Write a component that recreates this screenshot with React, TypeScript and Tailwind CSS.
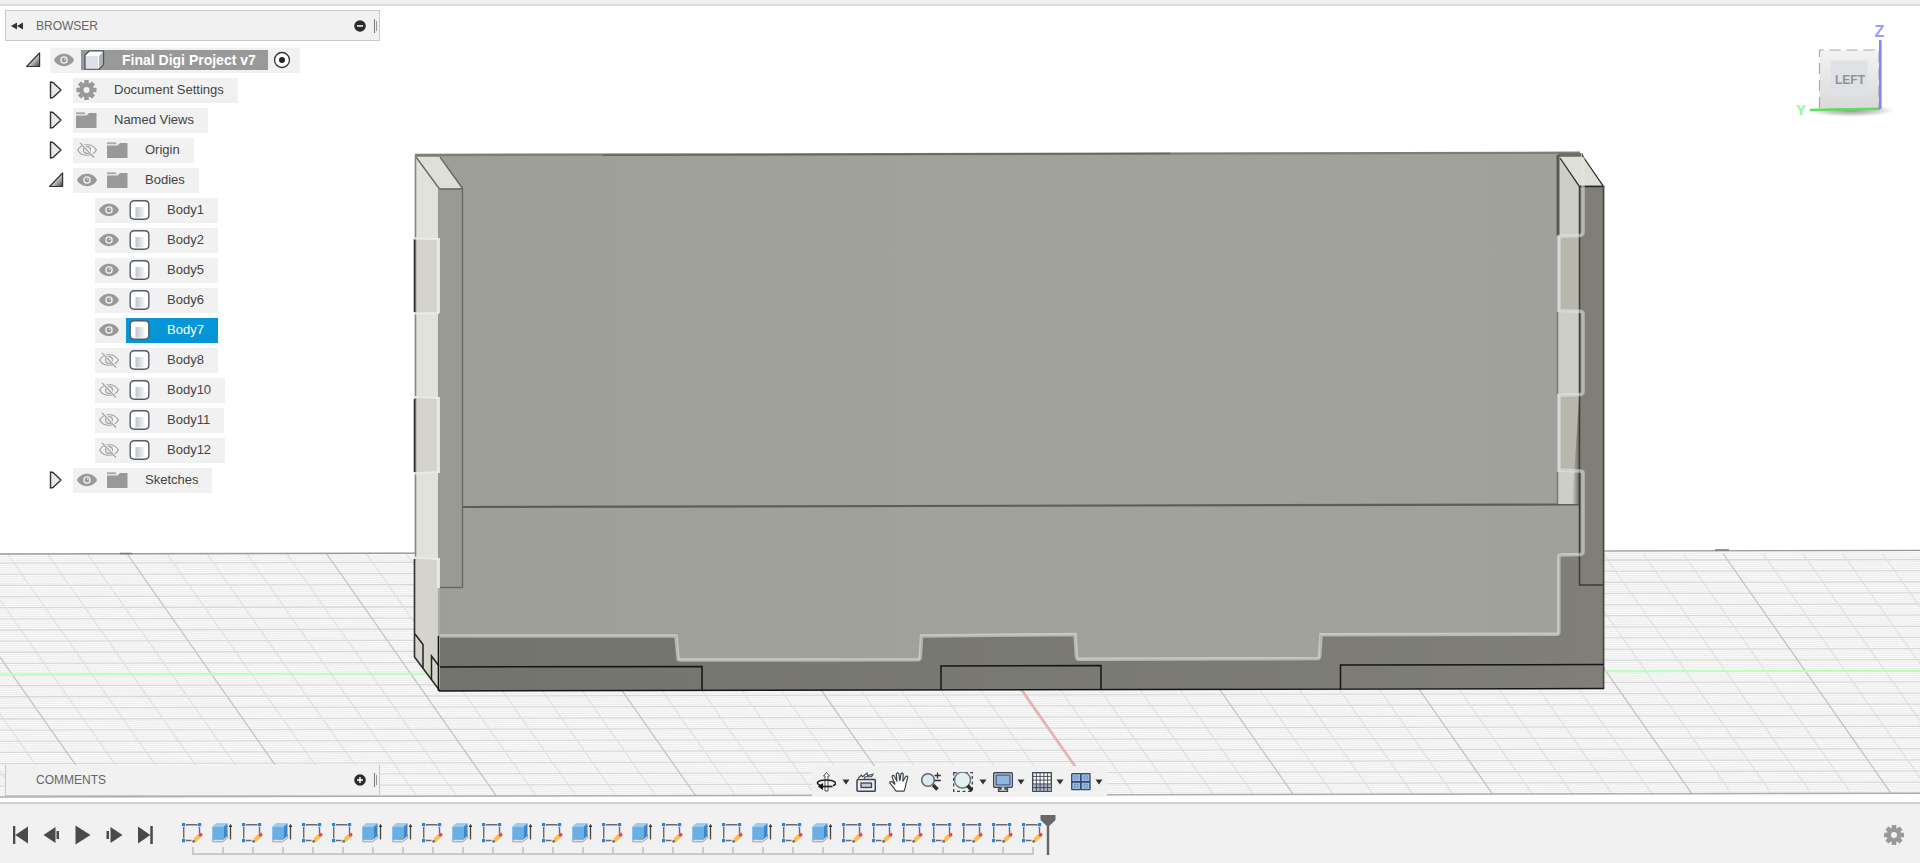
import React, { useState } from "react";

/* ---------- small icons ---------- */

function Gear({ className = "" }: { className?: string }) {
  return (
    <svg viewBox="0 0 20 20" className={`h-5 w-5 ${className}`} aria-hidden="true">
      <g fill="#999">
        {[0, 45, 90, 135].map((a) => (
          <rect key={a} x="7.700" y="0" width="4.600" height="20" rx="0.6" transform={`rotate(${a} 10 10)`} />
        ))}
        <circle cx="10" cy="10" r="7.300" />
      </g>
      <circle cx="10" cy="10" r="3" fill="#f1f1f1" />
    </svg>
  );
}

function Eye({ off = false }: { off?: boolean }) {
  return (
    <svg viewBox="0 0 20 20" className="h-5 w-5" aria-hidden="true">
      {off ? (
        <g fill="none" stroke="#a0a0a0" strokeWidth="1.200">
          <path d="M.6 10C4.500 3 15.500 3 19.400 10C15.500 17 4.500 17 .6 10Z" />
          <circle cx="10" cy="10" r="3.400" />
          <path d="M3.500 2.500L17.500 17.500" stroke="#f1f1f1" strokeWidth="2.600" />
          <path d="M3 2.800L17 17.500" />
        </g>
      ) : (
        <g>
          <path d="M0 10C4 1.800 16 1.800 20 10C16 18.200 4 18.200 0 10Z" fill="#999" />
          <circle cx="10" cy="10" r="3.100" fill="none" stroke="#f1f1f1" strokeWidth="1.300" />
          <circle cx="10.800" cy="9.200" r="0.800" fill="#f1f1f1" />
        </g>
      )}
    </svg>
  );
}

function Folder() {
  return (
    <svg viewBox="0 0 21 20" className="h-5 w-[21px]" aria-hidden="true">
      <path d="M0 2.300H8.500L10 4.300H0Z" fill="#aaa" />
      <path d="M0 5.500H10.500L13 3H20.500V18H0Z" fill="#999" />
    </svg>
  );
}

function Cylinder() {
  return (
    <svg viewBox="0 0 21 20" className="h-5 w-[21px]" aria-hidden="true">
      <defs>
        <linearGradient id="cyl">
          <stop offset="0" stopColor="#bfc4cc" />
          <stop offset="1" stopColor="#f4f5f8" />
        </linearGradient>
      </defs>
      <path d="M5.500 .8H15.500Q19.800 .8 19.800 4.500V15.500Q19.800 19.200 15.500 19.200H5.500Q1.200 19.200 1.200 15.500V4.500Q1.200 .8 5.500 .8Z" fill="#fff" stroke="#555b67" strokeWidth="1.400" />
      <rect x="6.500" y="7" width="9" height="10.500" fill="url(#cyl)" />
    </svg>
  );
}

function Component() {
  return (
    <svg viewBox="0 0 21 20" className="h-5 w-[21px]" aria-hidden="true">
      <path d="M1 5L5.500 .800H19.500V14.500L15 19.200H1Z" fill="#fff" stroke="#4a4f5a" strokeWidth="1.300" strokeLinejoin="round" />
      <rect x="2" y="6" width="12" height="12.500" fill="#dde0e6" />
      <path d="M15 6L19 2V14L15 18.500Z" fill="#aeb3bc" />
    </svg>
  );
}

function Twisty({ open }: { open: boolean }) {
  return (
    <svg viewBox="0 0 16 20" className="h-5 w-4" aria-hidden="true">
      <defs>
        <linearGradient id="tw" x1="0" y1="0" x2="1" y2="1">
          <stop offset="0.400" stopColor="#eee" />
          <stop offset="1" stopColor="#444" />
        </linearGradient>
      </defs>
      {open ? (
        <path d="M.6 16.500L13.600 3V16.500Z" fill="url(#tw)" stroke="#333" strokeWidth="1.200" strokeLinejoin="round" />
      ) : (
        <path d="M1.500 2V18L4 17.500L12 10L4 2.500Z" fill="#e8e8ea" stroke="#333" strokeWidth="1.400" strokeLinejoin="round" />
      )}
    </svg>
  );
}

function Caret() {
  return (
    <svg viewBox="0 0 8 6" className="h-1.5 w-2" aria-hidden="true">
      <path d="M.5 .5H7.500L4 5.500Z" fill="#333" />
    </svg>
  );
}

/* ---------- browser tree ---------- */

type Node = {
  label: string;
  level: 0 | 1 | 2;
  icon: "component" | "gear" | "folder" | "body";
  eye?: "on" | "off";
  open?: boolean;
};

const nodes: Node[] = [
  { label: "Final Digi Project v7", level: 0, icon: "component", eye: "on", open: true },
  { label: "Document Settings", level: 1, icon: "gear", open: false },
  { label: "Named Views", level: 1, icon: "folder", open: false },
  { label: "Origin", level: 1, icon: "folder", eye: "off", open: false },
  { label: "Bodies", level: 1, icon: "folder", eye: "on", open: true },
  { label: "Body1", level: 2, icon: "body", eye: "on" },
  { label: "Body2", level: 2, icon: "body", eye: "on" },
  { label: "Body5", level: 2, icon: "body", eye: "on" },
  { label: "Body6", level: 2, icon: "body", eye: "on" },
  { label: "Body7", level: 2, icon: "body", eye: "on" },
  { label: "Body8", level: 2, icon: "body", eye: "off" },
  { label: "Body10", level: 2, icon: "body", eye: "off" },
  { label: "Body11", level: 2, icon: "body", eye: "off" },
  { label: "Body12", level: 2, icon: "body", eye: "off" },
  { label: "Sketches", level: 1, icon: "folder", eye: "on", open: false },
];

const indent = ["pl-[21px]", "pl-[44px]", "pl-[66px]"];

function TreeRow({ node, selected, onSelect }: { node: Node; selected: boolean; onSelect: () => void }) {
  const root = node.level === 0;
  const tone = root
    ? "h-5 bg-[#999] text-white font-bold text-[14px] pr-3"
    : selected
      ? "h-[25px] bg-[#0696d7] text-white text-[13px] pr-[14px]"
      : "h-[25px] text-[#444] text-[13px] pr-[14px]";
  return (
    <li className={`flex h-[30px] items-center ${indent[node.level]}`}>
      <span className="flex w-6 shrink-0">
        {node.open !== undefined && (
          <button aria-label={`Toggle ${node.label}`}>
            <Twisty open={node.open} />
          </button>
        )}
      </span>
      <div className="flex h-[25px] items-center bg-[#f1f1f1]">
        {node.eye && (
          <button className="flex w-[31px] pl-1" aria-label={`Visibility of ${node.label}`}>
            <Eye off={node.eye === "off"} />
          </button>
        )}
        <button onClick={onSelect} className={`flex items-center gap-[17px] whitespace-nowrap pl-[3px] ${tone}`}>
          {node.icon === "gear" && <Gear className="w-[21px]" />}
          {node.icon === "folder" && <Folder />}
          {node.icon === "body" && <Cylinder />}
          {node.icon === "component" && <Component />}
          {node.label}
        </button>
        {root && (
          <button className="pl-1 pr-2" aria-label="Activate component">
            <svg viewBox="0 0 20 20" className="h-5 w-5" aria-hidden="true">
              <circle cx="10" cy="10" r="7.500" fill="#fff" stroke="#333" strokeWidth="1.300" />
              <circle cx="10" cy="10" r="3" fill="#222" />
            </svg>
          </button>
        )}
      </div>
    </li>
  );
}

function RoundSign({ plus }: { plus: boolean }) {
  return (
    <svg viewBox="0 0 12 12" className="h-3 w-3" aria-hidden="true">
      <circle cx="6" cy="6" r="5.800" fill="#2b2b2b" />
      <path d={plus ? "M3 6H9M6 3V9" : "M3 6H9"} stroke="#fff" strokeWidth="1.500" />
    </svg>
  );
}

function PanelBar({ title, collapse, plus }: { title: string; collapse: boolean; plus: boolean }) {
  return (
    <div
      className={`flex h-[31px] w-[375px] items-center border-[#c8c8c8] bg-[#f1f1f1] pl-[5px] text-[12px] text-[#666] ${
        collapse ? "border" : "border-x border-b"
      }`}
    >
      <span className="flex w-[25px]">
        {collapse && (
          <button aria-label="Collapse browser">
            <svg viewBox="0 0 12 8" className="h-2 w-3" aria-hidden="true">
              <path d="M6 .5V7.500L0 4ZM12 .5V7.500L6 4Z" fill="#333" />
            </svg>
          </button>
        )}
      </span>
      <h2 className="flex-1">{title}</h2>
      <button aria-label={`${plus ? "Expand" : "Minimise"} ${title}`}>
        <RoundSign plus={plus} />
      </button>
      <span className="ml-2 mr-0.5 flex items-center gap-px">
        <span className="h-[14px] w-px bg-[#777]" />
        <span className="h-[10px] w-px bg-[#999]" />
      </span>
    </div>
  );
}

/* ---------- 3D canvas ---------- */

const HORIZON = 554;
const FLOOR_END = 797;
const rows = Array.from({ length: 23 }, (_, i) => 563.2 + (i - 1) * 11.13);
const diagonals = Array.from({ length: 56 }, (_, i) => ({ x: 127.3 + (i - 8) * 39.9, major: (i - 8) % 5 === 0 }));

function Scene() {
  const drift = -3.7;
  return (
    <svg
      viewBox="0 6 1920 796"
      preserveAspectRatio="xMidYMid slice"
      className="absolute inset-0 h-full w-full"
      role="img"
      aria-label="Box model on the ground grid"
    >
      <defs>
        <clipPath id="floor">
          <path d={`M0 ${HORIZON}L1920 ${HORIZON + drift}V${FLOOR_END + drift}L0 ${FLOOR_END}Z`} />
        </clipPath>
        <linearGradient id="face">
          <stop offset="0" stopColor="#9d9e97" />
          <stop offset="0.300" stopColor="#a0a19a" />
          <stop offset="0.700" stopColor="#a2a29c" />
          <stop offset="1" stopColor="#a0a19a" />
        </linearGradient>
        <linearGradient id="base">
          <stop offset="0" stopColor="#72736c" />
          <stop offset="1" stopColor="#7f7f77" />
        </linearGradient>
        <linearGradient id="inner" x1="0" x2="1">
          <stop offset="0" stopColor="#7c7c76" stopOpacity="0" />
          <stop offset="1" stopColor="#6f6f69" />
        </linearGradient>
      </defs>
      <rect y="-300" width="1920" height="1500" fill="#fff" />

      {/* ground grid */}
      <g clipPath="url(#floor)">
        <rect y="540" width="1920" height="260" fill="#f9f9f9" />
        {rows.map((y) => (
          <g key={y}>
            {[2.2, 4.5, 6.7, 8.9].map((d) => (
              <path key={d} d={`M0 ${y + d}L1920 ${y + d + drift}`} stroke="#ececec" strokeWidth="1" />
            ))}
            <path d={`M0 ${y}L1920 ${y + drift}`} stroke="#d8d8d8" strokeWidth="1.300" />
          </g>
        ))}
        {diagonals.map(({ x, major }) => (
          <path
            key={x}
            d={`M${x} 554L${x + 171} 798`}
            stroke={major ? "#c3c3c3" : "#dfdfdf"}
            strokeWidth={major ? 1.3 : 1.1}
          />
        ))}
        <path d={`M0 674.500L1920 ${674.5 + drift}`} stroke="#b8ffb8" strokeWidth="2" />
        <path d="M927 554L1098 798" stroke="#ff9c9c" strokeWidth="1.400" />
      </g>
      <path d={`M0 ${HORIZON}L1920 ${HORIZON + drift}`} stroke="#9a9a9a" strokeWidth="1.300" />
      <path d={`M0 ${FLOOR_END}L1920 ${FLOOR_END + drift}`} stroke="#adadad" strokeWidth="1.600" />
      <path d="M120 553.500H132M1715 550H1729" stroke="#777" strokeWidth="1.500" />

      {/* box body */}
      <path d="M415 155L1580 153L1604 186V688L440 691L415 657Z" fill="url(#base)" />
      <path
        d="M415 155L1583 153V236H1559V311H1583V395H1559V471H1583V555H1559V634.500L1320 635V658.500L1077 659.500L1075 635L921 636L920 660H678L676.500 636H440Z"
        fill="url(#face)"
      />
      <path d="M440 189H462V587H440Z" fill="#999a94" />
      <path d="M415 155L1580 152.800" stroke="#7d7e7a" strokeWidth="2.400" fill="none" />
      <path d="M603 155.200L1170 153.500" stroke="#666762" strokeWidth="1.600" />
      <path d="M462 507L1580 504.500" stroke="#5d5e5a" strokeWidth="2.200" />

      {/* left wall */}
      <path d="M415 155L440 189V691L415 657Z" fill="#e1e2dc" />
      <path d="M415 238H439V313H415ZM415 397H439V473H415ZM415 558H439V690L415 657Z" fill="#d4d4cc" />
      <path d="M416 157H441L462 188.500H439.500Z" fill="#dfdfda" />
      <path d="M440 157L462.500 188.500M416 157L439.500 189H462.500V587.500H440" fill="none" stroke="#666762" strokeWidth="1.300" />
      <path d="M415.500 155V558" stroke="#858682" strokeWidth="1.600" />
      <path d="M439 189V238M439 313V397M439 473V558" stroke="#868781" strokeWidth="1.600" />
      <path d="M414.500 239V312M414.500 399V472M414.500 559V657L440 691" fill="none" stroke="#2f302c" strokeWidth="1.600" />
      <g stroke="#e9eae6" strokeWidth="2.200" fill="none">
        <path d="M414 238.500L438 239V313L414 313.500M414 397L438 398V472L414 473.500M414 557.500L438 559V588" />
      </g>
      <path d="M439 588V636" stroke="#aaaba6" strokeWidth="2" />
      <path d="M415 634L423 644.500V668M431.500 680V656L439 666" fill="none" stroke="#22231f" strokeWidth="1.500" />
      <path d="M438.500 636V691" stroke="#111" strokeWidth="1.600" />

      {/* right wall */}
      <path d="M1558 157H1579V504H1558Z" fill="#cdcec8" />
      <path d="M1560 236H1579V311H1560ZM1560 395H1579V471H1560Z" fill="#b7b7ad" />
      <path d="M1579 400V504H1572Z" fill="url(#inner)" />
      <path d="M1579.500 186H1603.500V585H1579.500Z" fill="#7f7e77" />
      <path d="M1559 157L1581 154L1603 185.500H1579.500Z" fill="#e0ded8" />
      <path d="M1558 155H1581" stroke="#6b6c69" strokeWidth="3.500" />
      <path d="M1558 155V236" stroke="#595a57" strokeWidth="3" />
      <path d="M1557.500 312V394M1557.500 472V504" stroke="#777872" strokeWidth="1.500" />
      <path d="M1560 158L1579.500 186.500H1603.500L1582 155" fill="none" stroke="#2c2c2a" strokeWidth="1.300" />
      <path d="M1579.500 187V585H1603.500" fill="none" stroke="#3c3d39" strokeWidth="1.500" />
      <path d="M1603.600 186V689" stroke="#444541" strokeWidth="1.600" />

      {/* base joints */}
      <g fill="none" stroke="#151613" strokeWidth="1.500">
        <path d="M440 667L702 666.500V690.500M941 690V666L1101 665.500V690M1340.500 689.500V665L1603.500 664.500" />
        <path d="M439 691L1604 688.500" />
      </g>

      {/* selected body outline */}
      <path
        d="M440 636L676 636L678 658Q678 660 680 660L918 659.800Q920 659.500 920.300 657L921.500 636L1075 634.500L1076.500 657Q1077 659.500 1079 659.200L1317 658.500Q1319.500 658.200 1319.700 656L1321 634.800L1557 634.300Q1558.800 634 1558.800 632V557Q1558.800 555 1561 555L1580 554.500Q1583 554 1583 552V473Q1583 471 1580 471L1559 470V395.500L1580 394.500Q1583 394 1583 392V314Q1583 311.500 1580 311.300L1559 310.500V236.500L1580 235.500Q1583 235 1583 232V157"
        fill="none"
        stroke="#e4e6e2"
        strokeOpacity="0.560"
        strokeWidth="3.500"
      />
    </svg>
  );
}

function ViewCube() {
  return (
    <svg viewBox="1790 16 120 110" className="h-[110px] w-[120px]" role="img" aria-label="View cube">
      <defs>
        <linearGradient id="cube" x1="0" y1="0" x2="0" y2="1">
          <stop offset="0" stopColor="#f3f3f3" />
          <stop offset="1" stopColor="#dadada" />
        </linearGradient>
        <radialGradient id="shade">
          <stop offset="0" stopColor="#777" stopOpacity="0.800" />
          <stop offset="0.600" stopColor="#999" stopOpacity="0.450" />
          <stop offset="1" stopColor="#aaa" stopOpacity="0" />
        </radialGradient>
      </defs>
      <ellipse cx="1851" cy="110.500" rx="44" ry="6.500" fill="url(#shade)" />
      <rect x="1819.500" y="50" width="60" height="58" fill="url(#cube)" />
      <path d="M1819.500 108V50H1879V108" fill="none" stroke="#aaa" strokeWidth="1.200" strokeDasharray="11 6" />
      <rect x="1830.500" y="60.500" width="37" height="36" fill="#dfe1e4" />
      <path d="M1810 110L1880 108.800" stroke="#5be05b" strokeWidth="2.400" />
      <path d="M1880.300 40V109" stroke="#8484ff" strokeWidth="2.600" />
      <text x="1850" y="83.500" textAnchor="middle" fontSize="12" fontWeight="700" fill="#8d9299">LEFT</text>
      <text x="1879.500" y="36.500" textAnchor="middle" fontSize="16" fontWeight="700" fill="#9a9aff">Z</text>
      <text x="1801" y="115" textAnchor="middle" fontSize="15" fontWeight="700" fill="#8cff8c">Y</text>
    </svg>
  );
}

/* ---------- navigation bar ---------- */

function NavIcon({ label, menu = false, gap = "gap-1", children }: { label: string; menu?: boolean; gap?: string; children: React.ReactNode }) {
  return (
    <button aria-label={label} className={`flex items-center ${gap}`}>
      <svg viewBox="0 0 20 20" className="h-5 w-5" fill="none" stroke="#3c424e" strokeWidth="1.300" aria-hidden="true">
        {children}
      </svg>
      {menu && <Caret />}
    </button>
  );
}

function NavBar() {
  return (
    <div role="toolbar" aria-label="Navigation" className="flex h-[31px] items-center bg-[#f1f1f1] px-1">
      <div className="flex items-center gap-[6px]">
        <NavIcon label="Orbit" menu gap="gap-[6px]">
          <path d="M9 19V4H7.500L10.500 .5L13.500 4H12V19Z" fill="#fff" strokeWidth="0.900" />
          <path d="M4.500 13.500C-1.500 11 2 8 10 8C19 8 22.500 11.500 17 13.800" stroke="#222" strokeWidth="1.600" />
          <path d="M2 14.500L7 11V18Z" fill="#111" stroke="none" />
          <path d="M6 14.500H16.500" stroke="#222" strokeWidth="1.700" />
        </NavIcon>
        <NavIcon label="Look At">
          <rect x="1" y="7.500" width="18.300" height="11.700" rx="1" fill="#eef0f2" strokeWidth="1.500" />
          <rect x="5" y="11" width="10.500" height="4.500" fill="#c3c9d4" />
          <path d="M2 6.500L5.500 3.200L6.500 4.800L11 1L11.500 3.500L17 2.300L15.500 4.800H9L8 6.800" fill="#fff" strokeWidth="1.100" />
        </NavIcon>
      </div>
      <div className="ml-[13px] flex items-center gap-3">
        <NavIcon label="Pan">
          <path
            d="M6.500 18.500C4.500 15 2.500 13 .8 11C.5 9.300 3 9.300 4 10.500L6 12.500L3 4.500C3.300 3 4.800 3 5.400 4.300L8 9.500L7.300 2C7.800 .5 9.500 .5 9.900 2L10.800 9L12 1.800C12.600 .6 14 .9 14.200 2.200L13.800 9.500L16.800 4.500C17.800 3.600 19 4.500 18.700 5.700L16.800 12.500C16.500 15 16 17 15 19.200H7.500Z"
            fill="#fff"
            strokeWidth="1.200"
          />
        </NavIcon>
        <NavIcon label="Zoom">
          <circle cx="7" cy="8" r="6.300" fill="#dcebed" stroke="#5c6874" strokeWidth="1.500" />
          <path d="M12 13L16.500 17.500" stroke="#333" strokeWidth="3.500" />
          <path d="M16.500 .5V6.500M13.500 3.500H19.800M13.500 8.500H19.800" stroke="#333" />
        </NavIcon>
        <NavIcon label="Fit" menu gap="gap-[6px]">
          <path d="M.7 .7H19.300V19.300H.7Z" stroke="#444" strokeDasharray="3 2.500" />
          <circle cx="9.500" cy="8" r="8" fill="#e3f0f0" stroke="#6a7680" strokeWidth="1.400" />
          <path d="M14.500 13.500L19.300 18.700" stroke="#2b2b2b" strokeWidth="3.500" />
        </NavIcon>
      </div>
      <div className="ml-[6px] flex items-center gap-[7px]">
        <NavIcon label="Display Settings" menu>
          <rect x=".7" y=".8" width="18.600" height="14.500" rx="1" fill="#f8f8f8" strokeWidth="1.400" />
          <rect x="3" y="3" width="14" height="10" fill="#92b6e2" stroke="#3c5a8c" />
          <path d="M8 15.300V17H5.500V19.300H14.500V17H12V15.300" fill="#ddd" />
        </NavIcon>
        <NavIcon label="Grid and Snaps" menu>
          <rect x=".7" y=".7" width="18.600" height="18.600" fill="#fdfdfd" />
          <path d="M1 12H19V19H1Z" fill="#a9b0bf" stroke="none" />
          <path d="M4.400 1V19M8.100 1V19M11.900 1V19M15.600 1V19M1 4.400H19M1 8.100H19M1 11.900H19M1 15.600H19" strokeWidth="0.900" />
        </NavIcon>
        <NavIcon label="Viewports" menu>
          <g fill="#9dbbe2" stroke="#34486e">
            <rect x=".7" y="1.700" width="9" height="8" rx=".7" />
            <rect x="10" y="1.700" width="9" height="8" rx=".7" />
            <rect x=".7" y="10" width="9" height="7.700" rx=".7" />
            <rect x="10" y="10" width="9" height="7.700" rx=".7" />
          </g>
          <path d="M3.500 4H7V7H3.500ZM13 4H16.500V7H13ZM3.500 12.300H7V15.300H3.500ZM13 12.300H16.500V15.300H13Z" stroke="#6f96c9" strokeWidth="1" />
        </NavIcon>
      </div>
    </div>
  );
}

/* ---------- timeline ---------- */

const controls = [
  { label: "Go to start", d: "M2 1H4.300V19H2ZM17 1.500V18.500L4.300 10Z" },
  { label: "Step back", d: "M13.500 2V18L1.500 10ZM14.500 6H17V14H14.500Z" },
  { label: "Play", d: "M2.500 .5V19.500L17.500 10Z" },
  { label: "Step forward", d: "M6.500 2V18L18.500 10ZM2.500 6H5V14H2.500Z" },
  { label: "Go to end", d: "M15.300 1H17.800V19H15.300ZM3 1.500V18.500L15.300 10Z" },
];

/* S = sketch, E = extrude */
const features = "SESESSEESESESESESESESESSSSSSS".split("");

function SketchIcon() {
  return (
    <svg viewBox="0 0 21 20" className="h-5 w-[21px]" aria-hidden="true">
      <path d="M4 1.700H15.500M1.700 4V15.500M17.500 4V10M4 17.500H9.500" stroke="#6b6b6b" strokeWidth="1.400" />
      <path d="M0 0H3.200V3.200H0ZM16 0H19.200V3.200H16ZM0 16H3.200V19.200H0Z" fill="#1e88e5" />
      <path d="M12.800 17.200L17.300 12.700" stroke="#ffbe45" strokeWidth="4.400" />
      <circle cx="18.500" cy="11.700" r="2" fill="#f44444" />
      <circle cx="11.700" cy="18.300" r="1.500" fill="#777" />
    </svg>
  );
}

function ExtrudeIcon() {
  return (
    <svg viewBox="0 0 21 20" className="h-5 w-[21px]" aria-hidden="true">
      <path d="M.8 16V18.800H10.500L15.700 15V12L10.500 16.500Z" fill="#e3e3e3" stroke="#999" strokeWidth="0.900" />
      <path d="M.3 4L4 .5H15.500L11.500 4V16.500H.3Z" fill="#69afe5" />
      <path d="M.3 4L4 .5H15.500L11.500 4Z" fill="#9acbf0" />
      <path d="M11.500 4L15.500 .5V12.500L11.500 16.500Z" fill="#3f87c4" />
      <path d="M18.500 3V16.500" stroke="#444" strokeWidth="1.300" />
      <path d="M16.700 4L18.500 .8L20.300 4Z" fill="#333" />
    </svg>
  );
}

function Timeline() {
  return (
    <footer className="flex h-[61px] items-center border-t-2 border-[#d2d2d2] bg-[#f1f1f1] pl-[5px] pr-4">
      <div className="mt-0.5 flex">
        {controls.map((c) => (
          <button key={c.label} aria-label={c.label} className="flex w-[31px] justify-center">
            <svg viewBox="0 0 20 20" className="h-5 w-5" aria-hidden="true">
              <path d={c.d} fill="#4a4a4a" />
            </svg>
          </button>
        ))}
      </div>
      <ol className="ml-[22px] mt-2.5 flex">
        {features.map((f, i) => (
          <li key={i} className="flex w-[30px] flex-col gap-1">
            <button aria-label={f === "S" ? `Sketch ${i + 1}` : `Extrude ${i + 1}`}>
              {f === "S" ? <SketchIcon /> : <ExtrudeIcon />}
            </button>
            <span className={`flex h-2 border-b-2 border-[#cacaca] ${i === 0 ? "ml-[10px] w-5" : i === features.length - 1 ? "w-3 pl-[10px]" : "w-[30px] pl-[10px]"}`}>
              <span className="h-full w-0.5 bg-[#cacaca]" />
            </span>
          </li>
        ))}
      </ol>
      <button aria-label="Timeline marker" className="-ml-3 mt-0.5">
        <svg viewBox="0 0 16 40" className="h-10 w-4" aria-hidden="true">
          <path d="M.5 0H15.500V5L9.200 11V40H6.800V11L.5 5Z" fill="#666" />
        </svg>
      </button>
      <button aria-label="Timeline settings" className="ml-auto mt-0.5">
        <Gear />
      </button>
    </footer>
  );
}

export default function App() {
  const [selected, setSelected] = useState("Body7");
  return (
    <div className="flex min-h-screen flex-col overflow-hidden bg-white font-['Liberation_Sans',Arial,sans-serif]">
      <header className="h-1.5 border-b-2 border-[#dedede] bg-[#f1f1f1]" />
      <main className="relative flex flex-1 flex-col justify-between">
        <Scene />
        <div className="relative flex items-start justify-between pl-[5px] pr-[10px] pt-1">
          <section aria-label="Browser">
            <PanelBar title="BROWSER" collapse plus={false} />
            <ul className="pt-1">
              {nodes.map((n) => (
                <TreeRow key={n.label} node={n} selected={selected === n.label} onSelect={() => setSelected(n.label)} />
              ))}
            </ul>
          </section>
          <div className="pt-[6px]">
            <ViewCube />
          </div>
        </div>
        <div className="relative grid grid-cols-[1fr_auto_1fr] items-end pb-[5px] pl-[5px] pr-[7px]">
          <section aria-label="Comments" className="pb-px">
            <PanelBar title="COMMENTS" collapse={false} plus />
          </section>
          <NavBar />
        </div>
      </main>
      <Timeline />
    </div>
  );
}
